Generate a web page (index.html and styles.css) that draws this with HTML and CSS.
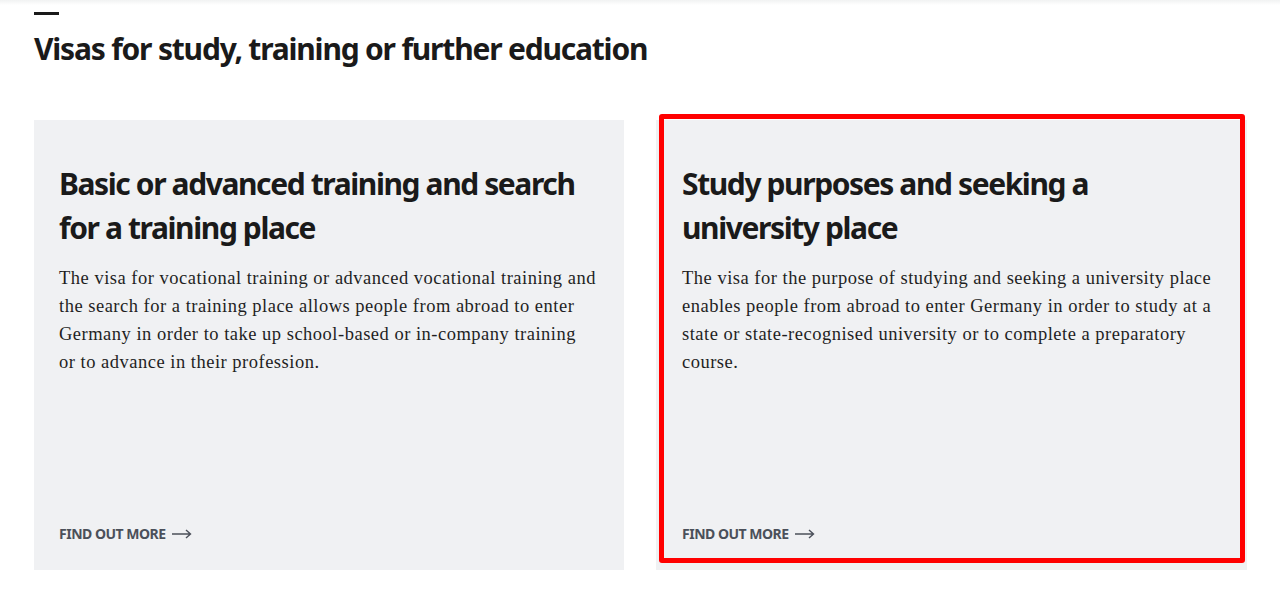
FILE: index.html
```html
<!DOCTYPE html>
<html lang="en">
<head>
<meta charset="utf-8">
<title>Visas for study, training or further education</title>
<link rel="stylesheet" href="styles.css">
</head>
<body>
<div class="topbar"></div>
<main class="section">
  <div class="dash"></div>
  <h2 class="section-title">Visas for study, training or further education</h2>
  <div class="cards">
    <article class="card">
      <h3 class="card-title">Basic or advanced training and search for a training place</h3>
      <p class="card-text">The visa for vocational training or advanced vocational training and the search for a training place allows people from abroad to enter Germany in order to take up school-based or in-company training or to advance in their profession.</p>
      <a class="more" href="#">FIND OUT MORE <svg class="arrow" width="20" height="10" viewBox="0 0 20 10"><path d="M0 5H18.5M14 1L18.5 5L14 9" fill="none" stroke="currentColor" stroke-width="1.4"/></svg></a>
    </article>
    <article class="card">
      <h3 class="card-title">Study purposes and seeking a university place</h3>
      <p class="card-text">The visa for the purpose of studying and seeking a university place enables people from abroad to enter Germany in order to study at a state or state-recognised university or to complete a preparatory course.</p>
      <a class="more" href="#">FIND OUT MORE <svg class="arrow" width="20" height="10" viewBox="0 0 20 10"><path d="M0 5H18.5M14 1L18.5 5L14 9" fill="none" stroke="currentColor" stroke-width="1.4"/></svg></a>
      <div class="highlight"></div>
    </article>
  </div>
</main>
</body>
</html>
```
FILE: styles.css
```css
html, body {
  margin: 0;
  padding: 0;
  background: #fff;
}
body {
  font-family: "Noto Sans", "Liberation Sans", sans-serif;
  color: #1a1a1a;
  height: 612px;
  overflow: hidden;
}
.topbar {
  height: 5px;
  background: linear-gradient(#f1f2f2, #fff);
}
.section {
  padding: 7px 33px 0 34px;
}
.dash {
  width: 25px;
  height: 3px;
  background: #1a1a1a;
}
.section-title {
  margin: 14px 0 0;
  font-size: 30px;
  line-height: 40px;
  font-weight: 700;
  letter-spacing: -1.2px;
}
.cards {
  display: grid;
  grid-template-columns: 590px 591px;
  column-gap: 32px;
  margin-top: 51px;
}
.card {
  position: relative;
  background: #f0f1f3;
  height: 450px;
  box-sizing: border-box;
  padding: 42px 25px 0;
  display: flex;
  flex-direction: column;
}
.card:last-child { padding-left: 26px; }
.card-title {
  margin: 0;
  font-size: 30px;
  line-height: 44px;
  font-weight: 700;
  letter-spacing: -1.4px;
  color: #1a1a1a;
}
.card-text {
  margin: 14px 0 0;
  max-width: 537px;
  font-family: "Liberation Serif", serif;
  font-size: 18.5px;
  line-height: 28px;
  letter-spacing: 0.5px;
  color: #1f1f1f;
}
.more {
  margin-top: auto;
  margin-bottom: 27px;
  display: flex;
  align-items: center;
  gap: 6px;
  font-size: 14px;
  font-weight: 700;
  color: #4b505a;
  text-decoration: none;
  letter-spacing: -0.5px;
}
.highlight {
  position: absolute;
  left: 3px;
  top: -6px;
  width: 586px;
  height: 449px;
  box-sizing: border-box;
  border: 5px solid #ff0000;
  border-radius: 3px;
}
```
